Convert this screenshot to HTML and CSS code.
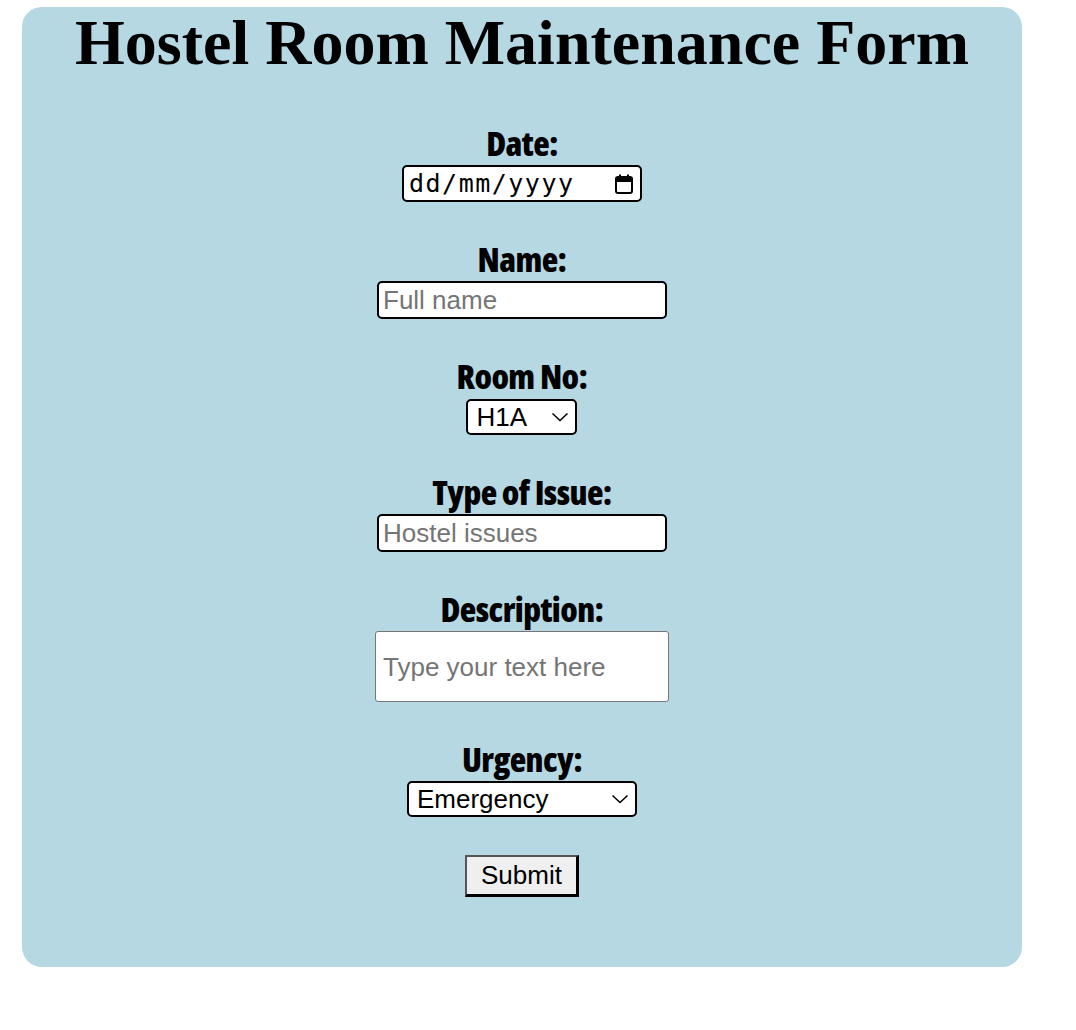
FILE: index.html
```html
<!DOCTYPE html>
<html lang="en">
<head>
<meta charset="utf-8">
<title>Hostel Room Maintenance Form</title>
<link rel="stylesheet" href="styles.css">
</head>
<body>
<div class="card">
  <h1 class="title">Hostel Room Maintenance Form</h1>
  <form class="form">
    <div class="field">
      <label class="label">Date:</label>
      <div class="date-field">
        <span class="date-text">dd/mm/yyyy</span>
        <svg class="cal-icon" width="20" height="22" viewBox="0 0 20 22" aria-hidden="true">
          <rect x="2" y="4" width="16" height="16" rx="2" ry="2" fill="none" stroke="#000" stroke-width="2"/>
          <rect x="2" y="4" width="16" height="5" fill="#000"/>
          <rect x="5" y="1.5" width="2" height="4" fill="#000"/>
          <rect x="13" y="1.5" width="2" height="4" fill="#000"/>
        </svg>
      </div>
    </div>
    <div class="field">
      <label class="label" for="name">Name:</label>
      <input class="text-input" id="name" type="text" placeholder="Full name">
    </div>
    <div class="field">
      <label class="label" for="room">Room No:</label>
      <select class="select select-room" id="room">
        <option>H1A</option>
      </select>
    </div>
    <div class="field">
      <label class="label" for="issue">Type of Issue:</label>
      <input class="text-input" id="issue" type="text" placeholder="Hostel issues">
    </div>
    <div class="field">
      <label class="label" for="desc">Description:</label>
      <textarea class="textarea" id="desc" placeholder="Type your text here"></textarea>
    </div>
    <div class="field">
      <label class="label" for="urgency">Urgency:</label>
      <select class="select select-urgency" id="urgency">
        <option>Emergency</option>
      </select>
    </div>
    <div class="field field-submit">
      <button class="submit" type="button">Submit</button>
    </div>
  </form>
</div>
</body>
</html>
```

FILE: styles.css
```css
html, body {
  margin: 0;
  padding: 0;
  background: #ffffff;
}

.card {
  box-sizing: border-box;
  width: 1000px;
  height: 960px;
  margin: 7px 0 0 22px;
  padding-top: 4px;
  background: #b5d8e3;
  border-radius: 20px;
}

.title {
  margin: 0;
  font-family: "Liberation Serif", "Times New Roman", serif;
  font-weight: bold;
  font-size: 64px;
  line-height: 64px;
  text-align: center;
  color: #000;
}

.form {
  display: flex;
  flex-direction: column;
  align-items: center;
  gap: 40px;
  margin-top: 51px;
}

.field {
  display: flex;
  flex-direction: column;
  align-items: center;
  gap: 5px;
}

.label {
  display: block;
  font-family: Impact, "Open Sans", sans-serif;
  font-weight: 800;
  font-stretch: 75%;
  font-size: 34px;
  line-height: 34px;
  letter-spacing: -0.6px;
  color: #000;
}

.date-field {
  box-sizing: border-box;
  width: 240px;
  height: 37px;
  display: flex;
  align-items: center;
  justify-content: space-between;
  padding: 0 6px 0 5px;
  background: #fff;
  border: 2px solid #000;
  border-radius: 5px;
}

.date-text {
  font-family: "DejaVu Sans Mono", "Liberation Mono", monospace;
  font-size: 25px;
  letter-spacing: 1.5px;
  color: #000;
}

.cal-icon {
  display: block;
}

.text-input {
  box-sizing: border-box;
  width: 290px;
  height: 38px;
  margin: 0;
  padding: 0 4px;
  font-family: "Liberation Sans", Arial, sans-serif;
  font-size: 26px;
  color: #000;
  background: #fff;
  border: 2px solid #000;
  border-radius: 5px;
  outline: none;
}

.text-input::placeholder,
.textarea::placeholder {
  color: #757575;
  opacity: 1;
}

.select {
  box-sizing: border-box;
  height: 36px;
  margin: 0;
  padding: 0 0 0 8px;
  font-family: "Liberation Sans", Arial, sans-serif;
  font-size: 26px;
  color: #000;
  border: 2px solid #000;
  border-radius: 5px;
  -webkit-appearance: none;
  appearance: none;
  background-color: #fff;
  background-image: url("data:image/svg+xml;utf8,<svg xmlns='http://www.w3.org/2000/svg' width='18' height='10' viewBox='0 0 18 10'><path d='M1.5 1.5 L9 8.5 L16.5 1.5' fill='none' stroke='%23000' stroke-width='1.6'/></svg>");
  background-repeat: no-repeat;
  background-position: right 6px center;
  background-size: 18px 10px;
}

.select-room {
  width: 111px;
  margin-top: 1px;
}

.select-urgency {
  width: 230px;
}

.textarea {
  box-sizing: border-box;
  width: 294px;
  height: 71px;
  margin: 0;
  padding: 20px 6px 0 7px;
  font-family: "Liberation Sans", Arial, sans-serif;
  font-size: 26px;
  background: #fff;
  border: 1px solid #767676;
  border-radius: 3px;
  resize: none;
  outline: none;
}

.field-submit {
  margin-top: -2px;
}

.submit {
  box-sizing: border-box;
  width: 114px;
  height: 42px;
  margin: 0;
  padding: 0;
  font-family: "Liberation Sans", Arial, sans-serif;
  font-size: 26px;
  color: #000;
  background: #efefef;
  border-style: solid;
  border-width: 2px 3px 3px 2px;
  border-color: #555 #000 #000 #555;
}
```
